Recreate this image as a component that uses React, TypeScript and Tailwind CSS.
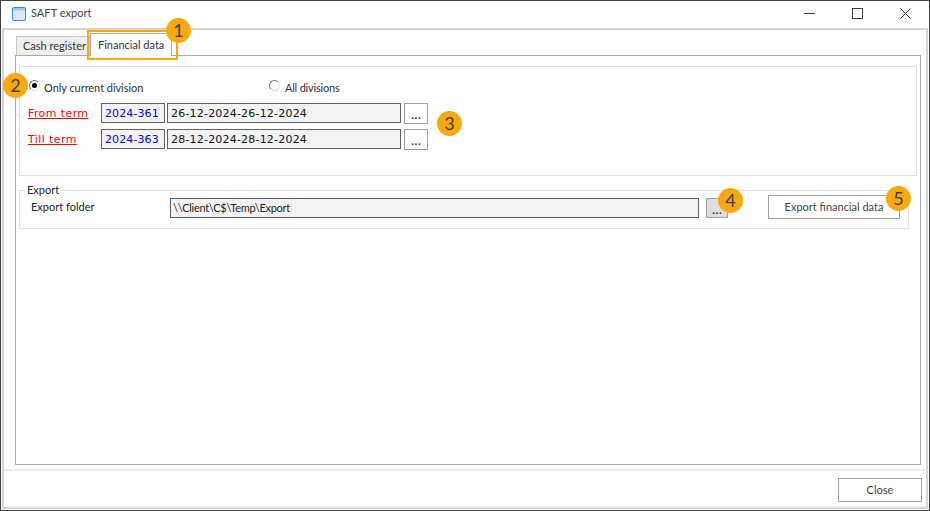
import React from "react";

const Badge = ({ n, className }: { n: number; className: string }) => (
  <span className={`absolute w-[25px] h-[25px] rounded-full bg-[#f9a80d] text-[#404040] text-[18px] leading-[25px] text-center ${className}`}>{n}</span>
);

const Radio = ({ on }: { on?: boolean }) => (
  <span className="w-[11px] h-[11px] -mt-[3px] rounded-full border border-[#777] border-b-[#ddd] border-r-[#ddd] bg-white flex items-center justify-center shrink-0">
    {on && <span className="w-[5px] h-[5px] rounded-full bg-black" />}
  </span>
);

const Dots = ({ className }: { className: string }) => (
  <button className={`border border-[#a0a0a0] text-[14px] leading-none text-[#333] flex items-center justify-center pt-[2px] ${className}`}>...</button>
);

const Term = ({ label, code, range }: { label: string; code: string; range: string }) => (
  <div className="flex items-center h-[22px]">
    <a className="text-[#ff0000] underline text-[11px] tracking-[0.4px] w-[73px] pt-[2px]" style={{ fontFamily: '"DejaVu Sans", sans-serif' }}>{label}</a>
    <div className="w-[64px] h-[20px] border border-[#606060] bg-[#f3f3f3] text-[#0000ff] text-[11px] leading-[19px] pl-[3px] tracking-[0.1px]" style={{ fontFamily: '"DejaVu Sans", sans-serif' }}>{code}</div>
    <div className="w-[234px] h-[20px] ml-[2px] border border-[#606060] bg-[#f3f3f3] text-[#111] text-[11px] leading-[19px] pl-[3px] tracking-[0.2px]" style={{ fontFamily: '"DejaVu Sans", sans-serif' }}>{range}</div>
    <Dots className="w-[24px] h-[21px] ml-[3px]" />
  </div>
);

export default function App() {
  return (
    <div className="relative w-[930px] h-[511px] bg-white border border-[#404040] flex flex-col text-[#333] overflow-hidden" style={{ fontFamily: 'Lato, "Noto Sans", sans-serif' }}>
      <div className="h-[27px] shrink-0 flex items-center pl-[11px] pb-[2px]">
        <svg width="14" height="14" viewBox="0 0 14 14" className="shrink-0">
          <rect x="0.5" y="0.5" width="13" height="13" rx="1.5" fill="#dfe6fb" stroke="#2f8fd8" />
          <rect x="1" y="1" width="12" height="2.5" fill="#9fc6ec" />
        </svg>
        <span className="ml-[5px] text-[11px] tracking-[0.05px] text-[#444]">SAFT export</span>
        <div className="ml-auto flex items-center text-[#404040]">
          <svg width="11" height="11" viewBox="0 0 11 11" className="mr-[37px]"><path d="M0 5.5h11" stroke="currentColor" /></svg>
          <svg width="11" height="11" viewBox="0 0 11 11" className="mr-[37px]"><rect x="0.5" y="0.5" width="10" height="10" fill="none" stroke="currentColor" /></svg>
          <svg width="11" height="11" viewBox="0 0 11 11" className="mr-[18px]"><path d="M0.5 0.5l10 10M10.5 0.5l-10 10" stroke="currentColor" /></svg>
        </div>
      </div>
      <div className="flex-1 ml-px mr-px mb-px border-2 border-[#d4d4d4] flex flex-col min-h-0">
        <div className="flex-1 pl-[11px] pr-[5px] pt-[3px] flex flex-col min-h-0">
          <div className="flex h-[22px] pl-px items-end relative z-10">
            <div className="w-[74px] h-[19px] bg-[#efefef] border border-[#c8c8c8] border-b-0 text-[11px] leading-[18px] pl-[6px] whitespace-nowrap">Cash register</div>
            <div className="w-[82px] h-[23px] -mb-px bg-white border border-[#a9a9a9] border-b-0 text-[11px] leading-[21px] pl-[7px] whitespace-nowrap">Financial data</div>
          </div>
          <div className="flex-1 border border-[#a9a9a9] px-[3px] pt-[10px] flex flex-col min-h-0">
            <div className="h-[110px] border border-[#e0e0e0] flex flex-col shrink-0 pl-[8px]">
              <div className="flex items-center h-[20px] mt-[10px] pl-px">
                <Radio on />
                <span className="ml-[4px] w-[225px] text-[11px] pt-[2px] tracking-[-0.05px]">Only current division</span>
                <Radio />
                <span className="ml-[5px] text-[11px] pt-[2px] tracking-[-0.2px]">All divisions</span>
              </div>
              <div className="mt-[5px] flex flex-col gap-[4px]">
                <Term label="From term" code="2024-361" range="26-12-2024-26-12-2024" />
                <Term label="Till term" code="2024-363" range="28-12-2024-28-12-2024" />
              </div>
            </div>
            <div className="relative mt-[14px] h-[39px] mr-[8px] border border-[#e0e0e0] flex items-start pl-[11px] shrink-0">
              <span className="absolute -top-[8px] left-[5px] bg-white px-[2px] text-[11px] leading-[14px] text-[#222]">Export</span>
              <span className="w-[139px] text-[11px] leading-[14px] text-[#222] mt-[9px]">Export folder</span>
              <div className="w-[529px] h-[20px] mt-[7px] border border-[#606060] bg-[#f3f3f3] text-[11px] leading-[18px] pl-[2px] text-[#222] tracking-[-0.3px]">\\Client\C$\Temp\Export</div>
              <Dots className="w-[22px] h-[20px] ml-[7px] mt-[7px] bg-[#dedede]" />
              <button className="ml-[40px] mt-[4px] w-[132px] h-[24px] border border-[#a0a0a0] text-[11px] pt-px text-[#444]">Export financial data</button>
            </div>
          </div>
        </div>
        <div className="h-[38px] mt-[4px] border-t-2 border-[#ececec] flex justify-end items-start pt-[7px] pr-[4px] shrink-0">
          <button className="w-[84px] h-[24px] border border-[#a0a0a0] text-[11px] text-[#444]">Close</button>
        </div>
      </div>
      <span className="absolute left-[86px] top-[29px] w-[91px] h-[30px] border-[2px] border-[#f9a80d] pointer-events-none z-20" />
      <Badge n={1} className="left-[165px] top-[17px] z-30" />
      <Badge n={2} className="left-[2px] top-[72px] z-30" />
      <Badge n={3} className="left-[436px] top-[110px] z-30" />
      <Badge n={4} className="left-[717px] top-[187px] z-30" />
      <Badge n={5} className="left-[885px] top-[185px] z-30" />
    </div>
  );
}
